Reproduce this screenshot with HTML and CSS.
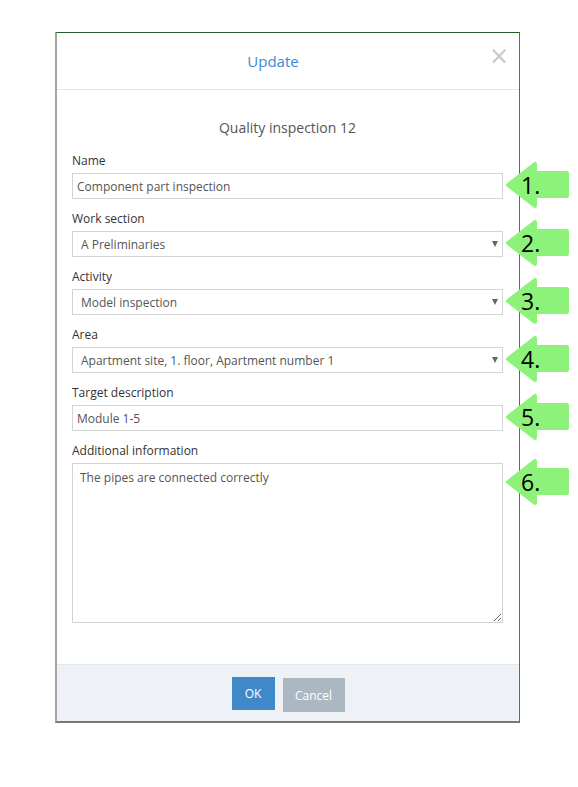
FILE: index.html
```html
<!DOCTYPE html>
<html lang="en">
<head>
    <meta charset="UTF-8">
    <meta name="viewport" content="width=device-width, initial-scale=1.0">
    <title>Update</title>
    <link rel="stylesheet" href="styles.css">
</head>
<body>
<div class="modal">
    <div class="modal-header">
        <div class="modal-title">Update</div>
        <button class="close">&times;</button>
    </div>
    <div class="modal-body">
        <div class="form-title">Quality inspection 12</div>

        <div class="group">
            <label>Name</label>
            <div class="field">
                <input type="text" value="Component part inspection">
                <div class="marker">
                    <svg viewBox="0 0 64 46" width="64" height="46"><polygon points="2,23 29,2 29,11 61,11 61,34 29,34 29,44"/></svg>
                    <span>1.</span>
                </div>
            </div>
        </div>

        <div class="group">
            <label>Work section</label>
            <div class="field select">
                <select><option>A Preliminaries</option></select>
                <div class="marker">
                    <svg viewBox="0 0 64 46" width="64" height="46"><polygon points="2,23 29,2 29,11 61,11 61,34 29,34 29,44"/></svg>
                    <span>2.</span>
                </div>
            </div>
        </div>

        <div class="group">
            <label>Activity</label>
            <div class="field select">
                <select><option>Model inspection</option></select>
                <div class="marker">
                    <svg viewBox="0 0 64 46" width="64" height="46"><polygon points="2,23 29,2 29,11 61,11 61,34 29,34 29,44"/></svg>
                    <span>3.</span>
                </div>
            </div>
        </div>

        <div class="group">
            <label>Area</label>
            <div class="field select">
                <select><option>Apartment site, 1. floor, Apartment number 1</option></select>
                <div class="marker">
                    <svg viewBox="0 0 64 46" width="64" height="46"><polygon points="2,23 29,2 29,11 61,11 61,34 29,34 29,44"/></svg>
                    <span>4.</span>
                </div>
            </div>
        </div>

        <div class="group">
            <label>Target description</label>
            <div class="field">
                <input type="text" value="Module 1-5">
                <div class="marker">
                    <svg viewBox="0 0 64 46" width="64" height="46"><polygon points="2,23 29,2 29,11 61,11 61,34 29,34 29,44"/></svg>
                    <span>5.</span>
                </div>
            </div>
        </div>

        <div class="group">
            <label>Additional information</label>
            <div class="field">
                <textarea>The pipes are connected correctly</textarea>
                <div class="marker marker-top">
                    <svg viewBox="0 0 64 46" width="64" height="46"><polygon points="2,23 29,2 29,11 61,11 61,34 29,34 29,44"/></svg>
                    <span>6.</span>
                </div>
            </div>
        </div>
    </div>
    <div class="modal-footer">
        <button class="btn btn-ok">OK</button>
        <button class="btn btn-cancel">Cancel</button>
    </div>
</div>
</body>
</html>
```

FILE: styles.css
```css
body{
    margin: 0;
    background: #fff;
    font-family: "Open Sans", "DejaVu Sans", sans-serif;
    color: #333;
}
.modal{
    width: 462px;
    margin: 32px 0 0 55px;
    border-top: 1px solid #2b5a2b;
    border-left: 2px solid #a4a4a4;
    border-right: 1px solid #666;
    border-bottom: 2px solid #777;
    background: #fff;
}
.modal-header{
    display: flex;
    align-items: center;
    height: 56px;
    border-bottom: 1px solid #e5e5e5;
    padding: 0 14px 0 0;
}
.modal-title{
    flex: 1;
    text-align: center;
    font-size: 15px;
    color: #3d8ad6;
    margin-top: -1px;
}
.close{
    border: none;
    background: none;
    padding: 0;
    width: 16px;
    margin-top: -11px;
    font-size: 24px;
    line-height: 24px;
    color: #c8c8c8;
    font-family: "DejaVu Sans", sans-serif;
}
.modal-body{
    padding: 28px 16px 41px 15px;
}
.form-title{
    text-align: center;
    font-size: 14px;
    line-height: 20px;
    color: #555;
    margin-bottom: 14px;
}
.group{
    margin-bottom: 11px;
}
.group:last-child{
    margin-bottom: 0;
}
label{
    display: block;
    font-size: 12px;
    line-height: 17px;
    color: #333;
    margin-bottom: 4px;
}
.field{
    position: relative;
}
input, select, textarea{
    display: block;
    box-sizing: border-box;
    width: 100%;
    border: 1px solid #d4d4d4;
    border-radius: 0;
    background: #fff;
    font-family: "Open Sans", "DejaVu Sans", sans-serif;
    font-size: 12px;
    color: #555;
    outline: none;
}
input{
    height: 26px;
    padding: 0 4px;
}
select{
    height: 26px;
    padding: 0 8px;
    appearance: none;
    -webkit-appearance: none;
}
.select::after{
    content: "";
    position: absolute;
    right: 5px;
    top: 10px;
    border-left: 3.5px solid transparent;
    border-right: 3.5px solid transparent;
    border-top: 6px solid #666;
    pointer-events: none;
}
textarea{
    height: 160px;
    padding: 5px 7px;
    resize: vertical;
}

/* numbered callouts pointing at each field */
.marker{
    position: absolute;
    left: calc(100% + 3px);
    top: 50%;
    width: 64px;
    height: 46px;
    margin-top: -24px;
}
.marker-top{
    top: -4px;
    margin-top: 0;
}
.marker svg{
    position: absolute;
    left: 0;
    top: 0;
}
.marker polygon{
    fill: #8df27a;
    stroke: #8df27a;
    stroke-width: 4;
    stroke-linejoin: round;
}
.marker span{
    position: absolute;
    left: 15px;
    top: 0;
    line-height: 46px;
    font-size: 23px;
    color: #000;
}
.modal-footer{
    display: flex;
    justify-content: center;
    align-items: flex-start;
    gap: 8px;
    height: 57px;
    padding-top: 12px;
    box-sizing: border-box;
    background: #eef2f6;
    border-top: 1px solid #e3e7ec;
}
.btn{
    border: none;
    height: 33px;
    font-family: "Open Sans", "DejaVu Sans", sans-serif;
    font-size: 12px;
    color: #fff;
}
.btn-ok{
    width: 43px;
    background: #3f89c9;
}
.btn-cancel{
    width: 62px;
    height: 34px;
    margin-top: 1px;
    background: #abb8c1;
}
```
